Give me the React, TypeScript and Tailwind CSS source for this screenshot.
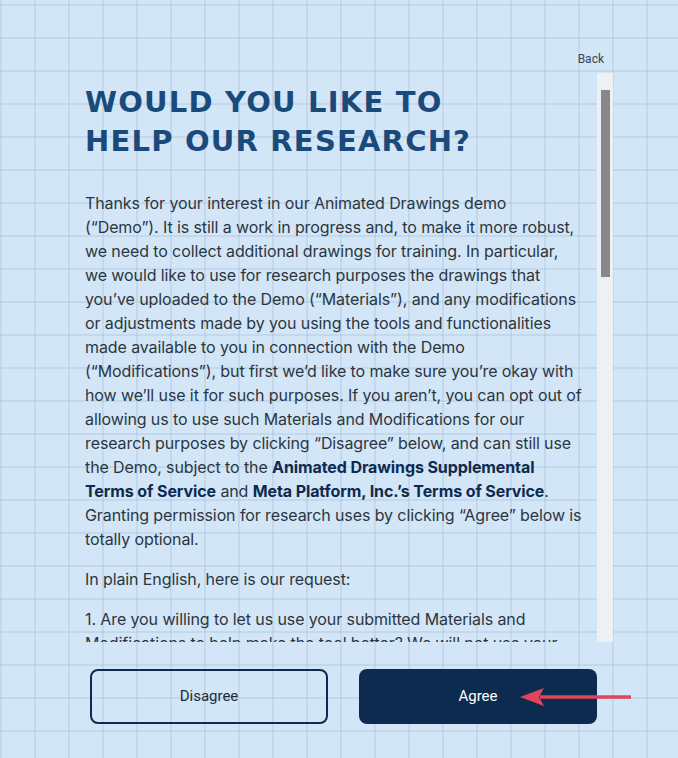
import React from 'react';

const bodyFont = { fontFamily: 'Inter, "Noto Sans", sans-serif' };

export default function App() {
  return (
    <div className="relative h-[758px] w-full overflow-hidden bg-[#d3e6f7] bg-[linear-gradient(to_right,rgba(140,170,195,0.22)_2px,transparent_2px),linear-gradient(to_bottom,rgba(140,170,195,0.22)_2px,transparent_2px)] bg-[size:34px_33px] bg-[position:0px_4px]">
      <div className="flex flex-col pt-[51px]">
        {/* Back link */}
        <div className="flex justify-end pr-[74px]">
          <button className="text-[12px] leading-4 text-[#3a4550]" style={{ fontFamily: 'Roboto, sans-serif' }}>
            Back
          </button>
        </div>

        {/* Scroll area */}
        <div className="mt-[6px] flex h-[569px] pl-[85px] pr-[65px]">
          <div className="w-[508px] overflow-hidden pt-[10px]">
            <h1
              className="text-[29px] font-bold uppercase leading-[39px] tracking-[1.2px] text-[#1a4a7c]"
              style={{ fontFamily: '"DejaVu Sans", Inter, sans-serif' }}
            >
              Would you like to
              <br />
              help our research?
            </h1>

            <div className="mt-[30px] space-y-4 text-[16px] leading-6 tracking-[-0.1px] text-[#2b3641]" style={bodyFont}>
              <p>
                Thanks for your interest in our Animated Drawings demo
                <br />
                (“Demo”). It is still a work in progress and, to make it more robust,
                <br />
                we need to collect additional drawings for training. In particular,
                <br />
                we would like to use for research purposes the drawings that
                <br />
                you’ve uploaded to the Demo (“Materials”), and any modifications
                <br />
                or adjustments made by you using the tools and functionalities
                <br />
                made available to you in connection with the Demo
                <br />
                (“Modifications”), but first we’d like to make sure you’re okay with
                <br />
                how we’ll use it for such purposes. If you aren’t, you can opt out of
                <br />
                allowing us to use such Materials and Modifications for our
                <br />
                research purposes by clicking “Disagree” below, and can still use
                <br />
                the Demo, subject to the{' '}
                <a className="font-bold text-[#0d2a4f]">
                  Animated Drawings Supplemental
                  <br />
                  Terms of Service
                </a>{' '}
                and <a className="font-bold text-[#0d2a4f]">Meta Platform, Inc.’s Terms of Service</a>.
                <br />
                Granting permission for research uses by clicking “Agree” below is
                <br />
                totally optional.
              </p>
              <p>In plain English, here is our request:</p>
              <p>
                1. Are you willing to let us use your submitted Materials and
                <br />
                Modifications to help make the tool better? We will not use your drawings for any other purpose.
              </p>
            </div>
          </div>

          {/* Scrollbar */}
          <div className="ml-auto h-full w-4 bg-[#eef1f4] pl-1 pt-[17px]">
            <div className="h-[187px] w-[9px] bg-[#888888]" />
          </div>
        </div>

        {/* Buttons */}
        <div className="mt-[27px] flex gap-[31px] pl-[90px]">
          <button
            className="h-[55px] w-[238px] rounded-lg border-2 border-[#0d2a4f] text-[15px] text-[#1c2b3f]"
            style={{ fontFamily: 'Roboto, sans-serif' }}
          >
            Disagree
          </button>
          <button
            className="h-[55px] w-[238px] rounded-lg bg-[#0d2a4f] text-[15px] text-white"
            style={{ fontFamily: 'Roboto, sans-serif' }}
          >
            Agree
          </button>
        </div>
      </div>

      {/* Annotation arrow */}
      <svg className="absolute left-[518px] top-[686px]" width="116" height="22" viewBox="0 0 116 22">
        <path d="M22 9.2 H113 V12.8 H22 Z" fill="#e2445c" />
        <path d="M2 11 L26 2 L21 11 L26 20 Z" fill="#e2445c" />
      </svg>
    </div>
  );
}
